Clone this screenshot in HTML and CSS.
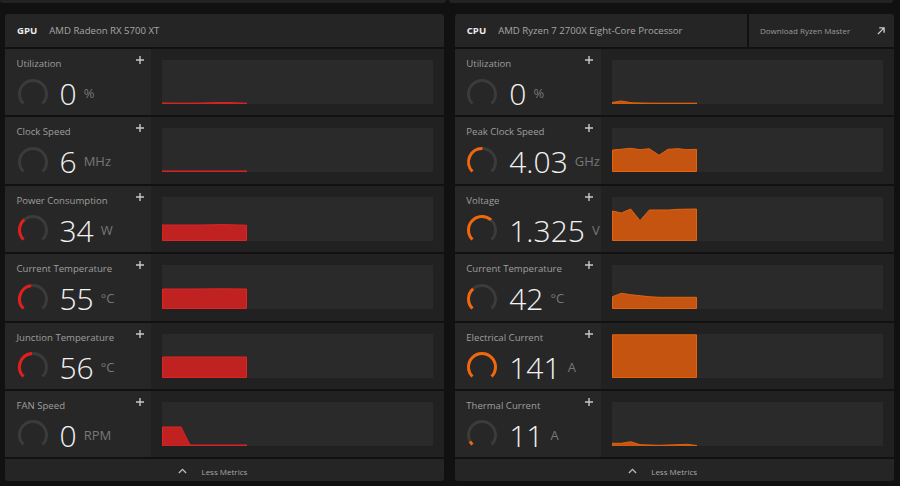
FILE: index.html
```html
<!DOCTYPE html>
<html>
<head>
<meta charset="utf-8">
<link rel="stylesheet" href="styles.css">
</head>
<body>
<div class="top">
  <div class="strip strip-l"></div>
  <div class="strip strip-r"></div>
</div>
<div class="panels">
  <section class="panel">
    <div class="head">
      <div class="head-main"><span class="kind">GPU</span><span class="name">AMD Radeon RX 5700 XT</span></div>
    </div>

    <div class="row">
      <div class="cell">
        <div class="label-row"><span class="label">Utilization</span><svg class="plus" viewBox="0 0 8 8"><path d="M4 0V8M0 4H8"/></svg></div>
        <div class="value-row">
          <svg class="gauge" viewBox="0 0 32 32"><path class="track" d="M6.454 25.546A13.5 13.5 0 1 1 25.546 25.546"/></svg>
          <span class="num">0<span class="unit">%</span></span>
        </div>
      </div>
      <div class="chart-area"><div class="chart-box"><svg class="chart red" viewBox="0 0 85 44" preserveAspectRatio="none"><polygon points="0,43 20,43.2 40,43 60,42.5 70,42.7 85,43.2 85,44 0,44"/></svg></div></div>
    </div>

    <div class="row">
      <div class="cell">
        <div class="label-row"><span class="label">Clock Speed</span><svg class="plus" viewBox="0 0 8 8"><path d="M4 0V8M0 4H8"/></svg></div>
        <div class="value-row">
          <svg class="gauge" viewBox="0 0 32 32"><path class="track" d="M6.454 25.546A13.5 13.5 0 1 1 25.546 25.546"/></svg>
          <span class="num">6<span class="unit">MHz</span></span>
        </div>
      </div>
      <div class="chart-area"><div class="chart-box"><svg class="chart red" viewBox="0 0 85 44" preserveAspectRatio="none"><polygon points="0,43 85,43 85,44 0,44"/></svg></div></div>
    </div>

    <div class="row">
      <div class="cell">
        <div class="label-row"><span class="label">Power Consumption</span><svg class="plus" viewBox="0 0 8 8"><path d="M4 0V8M0 4H8"/></svg></div>
        <div class="value-row">
          <svg class="gauge" viewBox="0 0 32 32"><path class="track" d="M6.454 25.546A13.5 13.5 0 1 1 25.546 25.546"/><path class="fill red" d="M6.454 25.546A13.5 13.5 0 0 1 7.322 5.659"/></svg>
          <span class="num">34<span class="unit">W</span></span>
        </div>
      </div>
      <div class="chart-area"><div class="chart-box"><svg class="chart red" viewBox="0 0 85 44" preserveAspectRatio="none"><polygon points="0,28 40,28 60,27.6 84.5,28.2 84.5,43.5 0.5,43.5"/></svg></div></div>
    </div>

    <div class="row">
      <div class="cell">
        <div class="label-row"><span class="label">Current Temperature</span><svg class="plus" viewBox="0 0 8 8"><path d="M4 0V8M0 4H8"/></svg></div>
        <div class="value-row">
          <svg class="gauge" viewBox="0 0 32 32"><path class="track" d="M6.454 25.546A13.5 13.5 0 1 1 25.546 25.546"/><path class="fill red" d="M6.454 25.546A13.5 13.5 0 0 1 14.121 2.631"/></svg>
          <span class="num">55<span class="unit">°C</span></span>
        </div>
      </div>
      <div class="chart-area"><div class="chart-box"><svg class="chart red" viewBox="0 0 85 44" preserveAspectRatio="none"><polygon points="0.5,24 30,24 60,23.8 84.5,24 84.5,43.5 0.5,43.5"/></svg></div></div>
    </div>

    <div class="row">
      <div class="cell">
        <div class="label-row"><span class="label">Junction Temperature</span><svg class="plus" viewBox="0 0 8 8"><path d="M4 0V8M0 4H8"/></svg></div>
        <div class="value-row">
          <svg class="gauge" viewBox="0 0 32 32"><path class="track" d="M6.454 25.546A13.5 13.5 0 1 1 25.546 25.546"/><path class="fill red" d="M6.454 25.546A13.5 13.5 0 0 1 15.058 2.533"/></svg>
          <span class="num">56<span class="unit">°C</span></span>
        </div>
      </div>
      <div class="chart-area"><div class="chart-box"><svg class="chart red" viewBox="0 0 85 44" preserveAspectRatio="none"><polygon points="0.5,23 84.5,23 84.5,43.5 0.5,43.5"/></svg></div></div>
    </div>

    <div class="row">
      <div class="cell">
        <div class="label-row"><span class="label">FAN Speed</span><svg class="plus" viewBox="0 0 8 8"><path d="M4 0V8M0 4H8"/></svg></div>
        <div class="value-row">
          <svg class="gauge" viewBox="0 0 32 32"><path class="track" d="M6.454 25.546A13.5 13.5 0 1 1 25.546 25.546"/></svg>
          <span class="num">0<span class="unit">RPM</span></span>
        </div>
      </div>
      <div class="chart-area"><div class="chart-box"><svg class="chart red" viewBox="0 0 85 44" preserveAspectRatio="none"><polygon points="0.5,25 19,25 28,43 85,43 85,44 0.5,44"/></svg></div></div>
    </div>

    <div class="foot">
      <svg class="caret" viewBox="0 0 10 6"><path d="M1 5.2L5 1.2L9 5.2"/></svg>
      <span>Less Metrics</span>
    </div>
  </section>

  <section class="panel">
    <div class="head">
      <div class="head-main"><span class="kind">CPU</span><span class="name">AMD Ryzen 7 2700X Eight-Core Processor</span></div>
      <div class="head-dl"><span>Download Ryzen Master</span><svg class="ext" viewBox="0 0 9 9"><path d="M1 8L8 1M2.5 1H8V6.5"/></svg></div>
    </div>

    <div class="row">
      <div class="cell">
        <div class="label-row"><span class="label">Utilization</span><svg class="plus" viewBox="0 0 8 8"><path d="M4 0V8M0 4H8"/></svg></div>
        <div class="value-row">
          <svg class="gauge" viewBox="0 0 32 32"><path class="track" d="M6.454 25.546A13.5 13.5 0 1 1 25.546 25.546"/></svg>
          <span class="num">0<span class="unit">%</span></span>
        </div>
      </div>
      <div class="chart-area"><div class="chart-box"><svg class="chart orange" viewBox="0 0 85 44" preserveAspectRatio="none"><polygon points="0,42.5 9,41 20,42.8 40,43.2 85,43.2 85,44 0,44"/></svg></div></div>
    </div>

    <div class="row">
      <div class="cell">
        <div class="label-row"><span class="label">Peak Clock Speed</span><svg class="plus" viewBox="0 0 8 8"><path d="M4 0V8M0 4H8"/></svg></div>
        <div class="value-row">
          <svg class="gauge" viewBox="0 0 32 32"><path class="track" d="M6.454 25.546A13.5 13.5 0 1 1 25.546 25.546"/><path class="fill orange" d="M6.454 25.546A13.5 13.5 0 0 1 16.471 2.508"/></svg>
          <span class="num">4.03<span class="unit">GHz</span></span>
        </div>
      </div>
      <div class="chart-area"><div class="chart-box"><svg class="chart orange" viewBox="0 0 85 44" preserveAspectRatio="none"><polygon points="0.5,22 8.7,21.3 18.7,20.3 28,21.7 37.3,20.7 47,27.3 56,21.3 66,20.7 74.7,21.7 84.5,21.3 84.5,43.5 0.5,43.5"/></svg></div></div>
    </div>

    <div class="row">
      <div class="cell">
        <div class="label-row"><span class="label">Voltage</span><svg class="plus" viewBox="0 0 8 8"><path d="M4 0V8M0 4H8"/></svg></div>
        <div class="value-row">
          <svg class="gauge" viewBox="0 0 32 32"><path class="track" d="M6.454 25.546A13.5 13.5 0 1 1 25.546 25.546"/><path class="fill orange" d="M6.454 25.546A13.5 13.5 0 0 1 25.033 5.968"/></svg>
          <span class="num">1.325<span class="unit">V</span></span>
        </div>
      </div>
      <div class="chart-area"><div class="chart-box"><svg class="chart orange" viewBox="0 0 85 44" preserveAspectRatio="none"><polygon points="0.5,14 9.3,16 18.7,12 28,23.7 37.3,13 47,13 57,13 66,12.3 84.5,12 84.5,43.5 0.5,43.5"/></svg></div></div>
    </div>

    <div class="row">
      <div class="cell">
        <div class="label-row"><span class="label">Current Temperature</span><svg class="plus" viewBox="0 0 8 8"><path d="M4 0V8M0 4H8"/></svg></div>
        <div class="value-row">
          <svg class="gauge" viewBox="0 0 32 32"><path class="track" d="M6.454 25.546A13.5 13.5 0 1 1 25.546 25.546"/><path class="fill orange" d="M6.454 25.546A13.5 13.5 0 0 1 7.143 5.811"/></svg>
          <span class="num">42<span class="unit">°C</span></span>
        </div>
      </div>
      <div class="chart-area"><div class="chart-box"><svg class="chart orange" viewBox="0 0 85 44" preserveAspectRatio="none"><polygon points="0.5,31.7 9.3,28.3 18.7,29.7 28,30.7 37.3,31.7 47,32.3 84.5,32.3 84.5,43.5 0.5,43.5"/></svg></div></div>
    </div>

    <div class="row">
      <div class="cell">
        <div class="label-row"><span class="label">Electrical Current</span><svg class="plus" viewBox="0 0 8 8"><path d="M4 0V8M0 4H8"/></svg></div>
        <div class="value-row">
          <svg class="gauge" viewBox="0 0 32 32"><path class="track" d="M6.454 25.546A13.5 13.5 0 1 1 25.546 25.546"/><path class="fill orange" d="M6.454 25.546A13.5 13.5 0 1 1 25.546 25.546"/></svg>
          <span class="num">141<span class="unit">A</span></span>
        </div>
      </div>
      <div class="chart-area"><div class="chart-box"><svg class="chart orange" viewBox="0 0 85 44" preserveAspectRatio="none"><polygon points="0.5,0.8 84.5,0.8 84.5,43.5 0.5,43.5"/></svg></div></div>
    </div>

    <div class="row">
      <div class="cell">
        <div class="label-row"><span class="label">Thermal Current</span><svg class="plus" viewBox="0 0 8 8"><path d="M4 0V8M0 4H8"/></svg></div>
        <div class="value-row">
          <svg class="gauge" viewBox="0 0 32 32"><path class="track" d="M6.454 25.546A13.5 13.5 0 1 1 25.546 25.546"/><path class="fill orange" d="M6.454 25.546A13.5 13.5 0 0 1 4.080 22.340"/></svg>
          <span class="num">11<span class="unit">A</span></span>
        </div>
      </div>
      <div class="chart-area"><div class="chart-box"><svg class="chart orange" viewBox="0 0 85 44" preserveAspectRatio="none"><polygon points="0,41.3 9.3,41.3 18.7,39.7 28,42.7 47,43.3 66,42.7 74.7,42.3 85,43.5 85,44 0,44"/></svg></div></div>
    </div>

    <div class="foot">
      <svg class="caret" viewBox="0 0 10 6"><path d="M1 5.2L5 1.2L9 5.2"/></svg>
      <span>Less Metrics</span>
    </div>
  </section>
</div>
</body>
</html>
```

FILE: styles.css
```css
html, body {
  margin: 0;
  padding: 0;
}

body {
  width: 900px;
  height: 486px;
  overflow: hidden;
  background: #111111;
  font-family: "Open Sans", "Noto Sans", "DejaVu Sans", sans-serif;
  color: #a0a0a0;
}

.top {
  display: flex;
  height: 3px;
}

.strip {
  height: 3px;
  background: #232323;
  border-radius: 0 0 3px 3px;
}

.strip-l {
  width: 446px;
}

.strip-r {
  width: 444px;
  margin-left: 3px;
}

.panels {
  display: grid;
  grid-template-columns: 1fr 1fr;
  gap: 11px;
  padding: 11px 6.5px 0 5px;
}

.panel {
  display: flex;
  flex-direction: column;
  gap: 2px;
  border-radius: 3px;
  overflow: hidden;
}

.head {
  display: flex;
  gap: 2px;
  height: 33px;
}

.head-main {
  flex: 1;
  display: flex;
  align-items: center;
  gap: 12px;
  padding-left: 12px;
  background: #252525;
  font-size: 9.6px;
}

.kind {
  color: #ececec;
  font-weight: 700;
}

.name {
  color: #a6a6a6;
}

.head-dl {
  width: 144.5px;
  display: flex;
  align-items: center;
  justify-content: space-between;
  padding: 0 9px 0 11px;
  box-sizing: border-box;
  background: #252525;
  font-size: 8px;
  color: #999999;
}

.ext {
  width: 8px;
  height: 8px;
  fill: none;
  stroke: #cccccc;
  stroke-width: 1.5;
}

.row {
  display: grid;
  grid-template-columns: 146px 1fr;
  height: 66.4px;
}

.cell {
  background: #272727;
  padding: 8px 7.5px 0 11.5px;
}

.label-row {
  display: flex;
  justify-content: space-between;
  align-items: flex-start;
  height: 13px;
}

.label {
  font-size: 9.6px;
  line-height: 13px;
  color: #9e9e9e;
  white-space: nowrap;
}

.plus {
  width: 8px;
  height: 8px;
  margin-top: -1px;
  stroke: #c8c8c8;
  stroke-width: 1.4;
}

.value-row {
  display: flex;
  align-items: center;
  gap: 11px;
  margin-top: 7.5px;
  height: 32px;
}

.gauge {
  width: 32px;
  height: 32px;
  flex: none;
  fill: none;
}

.gauge .track {
  stroke: #3b3b3b;
  stroke-width: 3;
}

.gauge .fill {
  stroke-width: 3;
}

.gauge .fill.red {
  stroke: #e61d1d;
}

.gauge .fill.orange {
  stroke: #f2660d;
}

.num {
  font-size: 30px;
  line-height: 30px;
  font-weight: 300;
  color: #f2f2f2;
  white-space: nowrap;
}

.unit {
  font-size: 13px;
  font-weight: 400;
  color: #777777;
  margin-left: 7px;
  vertical-align: 7px;
}

.chart-area {
  background: #212121;
  padding: 11px;
}

.chart-box {
  height: 44px;
  background: #2a2a2a;
}

.chart {
  display: block;
  width: 85px;
  height: 44px;
}

.chart.red polygon {
  fill: #c02121;
  stroke: #e02424;
  stroke-width: 1;
}

.chart.orange polygon {
  fill: #c4540f;
  stroke: #e2630f;
  stroke-width: 1;
}

.foot {
  height: 22px;
  box-sizing: border-box;
  padding-top: 2px;
  display: flex;
  align-items: center;
  justify-content: center;
  gap: 14px;
  padding-right: 23px;
  background: #252525;
  font-size: 8px;
  color: #a8a8a8;
}

.caret {
  width: 9px;
  height: 6px;
  margin-top: -1px;
  fill: none;
  stroke: #bbbbbb;
  stroke-width: 1.5;
}
```
